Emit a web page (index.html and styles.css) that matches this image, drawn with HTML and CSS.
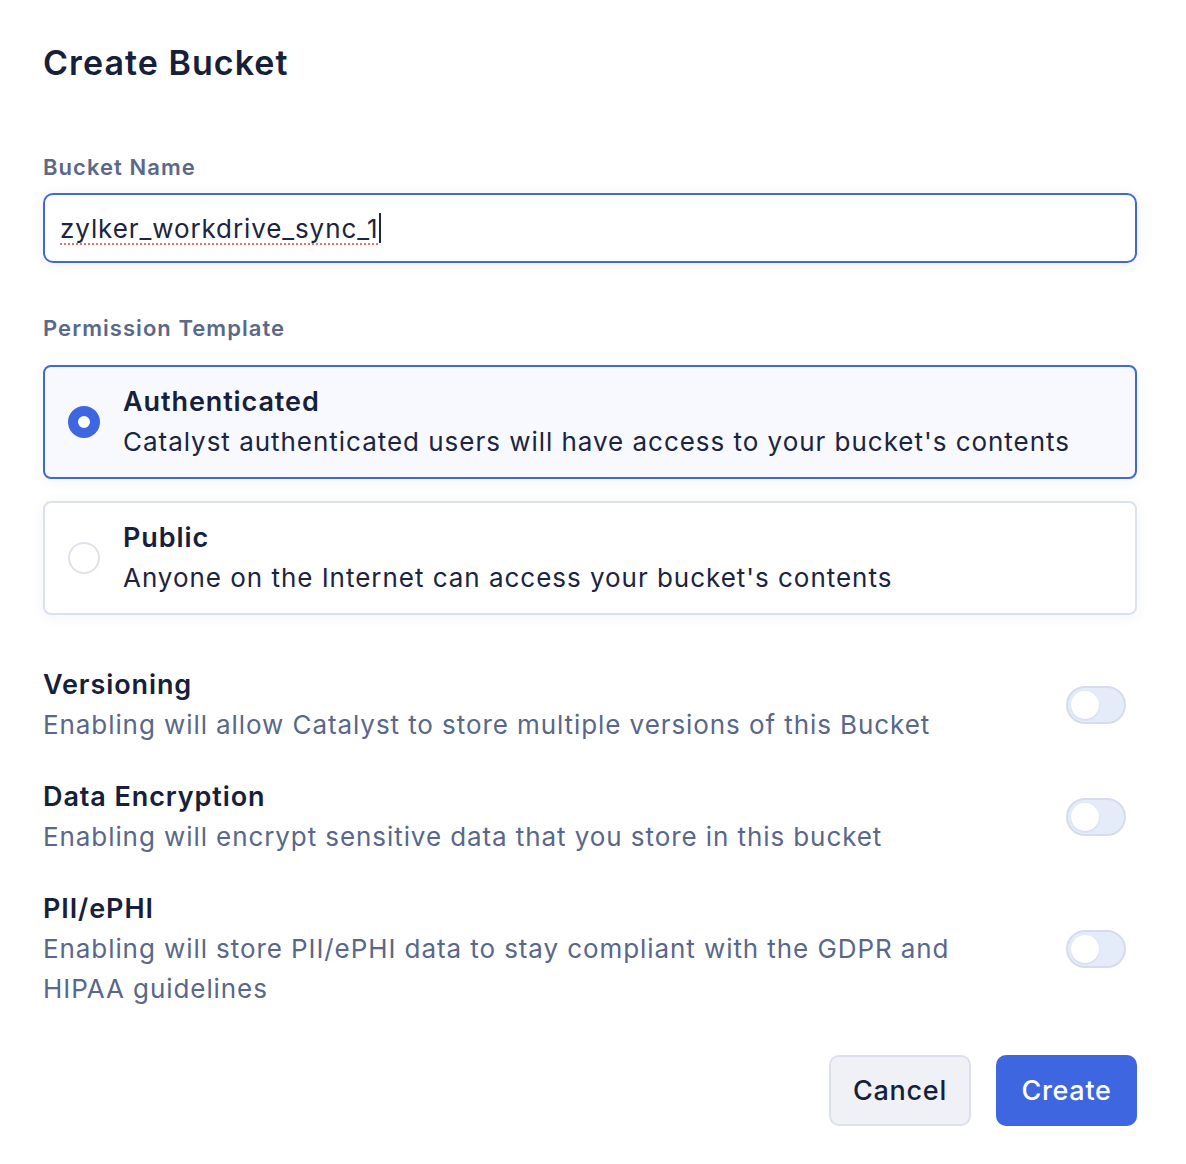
FILE: index.html
```html
<!DOCTYPE html>
<html lang="en">
<head>
<meta charset="utf-8">
<title>Create Bucket</title>
<link rel="stylesheet" href="styles.css">
</head>
<body>
<main class="dialog">
  <h1 class="title">Create Bucket</h1>

  <section class="field">
    <label class="label">Bucket Name</label>
    <div class="input" role="textbox"><span class="value">zylker_workdrive_sync_1</span><span class="caret"></span></div>
  </section>

  <section class="field perm">
    <label class="label">Permission Template</label>
    <div class="options">
      <div class="option selected">
        <span class="radio on"></span>
        <div class="opt-text">
          <div class="opt-title">Authenticated</div>
          <div class="opt-desc">Catalyst authenticated users will have access to your bucket's contents</div>
        </div>
      </div>
      <div class="option">
        <span class="radio"></span>
        <div class="opt-text">
          <div class="opt-title">Public</div>
          <div class="opt-desc">Anyone on the Internet can access your bucket's contents</div>
        </div>
      </div>
    </div>
  </section>

  <section class="settings">
    <div class="setting">
      <div class="set-text">
        <div class="set-title">Versioning</div>
        <div class="set-desc">Enabling will allow Catalyst to store multiple versions of this Bucket</div>
      </div>
      <span class="toggle"><span class="knob"></span></span>
    </div>
    <div class="setting">
      <div class="set-text">
        <div class="set-title">Data Encryption</div>
        <div class="set-desc">Enabling will encrypt sensitive data that you store in this bucket</div>
      </div>
      <span class="toggle"><span class="knob"></span></span>
    </div>
    <div class="setting">
      <div class="set-text">
        <div class="set-title">PII/ePHI</div>
        <div class="set-desc">Enabling will store PII/ePHI data to stay compliant with the GDPR and HIPAA guidelines</div>
      </div>
      <span class="toggle"><span class="knob"></span></span>
    </div>
  </section>

  <footer class="actions">
    <button class="btn cancel">Cancel</button>
    <button class="btn create">Create</button>
  </footer>
</main>
</body>
</html>
```
FILE: styles.css
```css
* { box-sizing: border-box; }
html, body { margin: 0; padding: 0; background: #ffffff; }
body {
  font-family: Inter, "Noto Sans", "Liberation Sans", sans-serif;
  color: #1b2440;
}
.dialog {
  width: 1094px;
  margin-left: 43px;
  padding-top: 41px;
  display: flex;
  flex-direction: column;
}
.title {
  margin: 0;
  font-size: 34px;
  line-height: 44px;
  font-weight: 600;
  color: #16203b;
  letter-spacing: 1.05px;
}
.field { display: flex; flex-direction: column; gap: 11px; margin-top: 67px; }
.field.perm { margin-top: 50px; gap: 22px; }
.label {
  font-size: 22px;
  line-height: 30px;
  font-weight: 600;
  color: #5b6888;
  letter-spacing: 1.05px;
}
.input {
  height: 70px;
  border: 2px solid #3f68d8;
  border-radius: 10px;
  padding: 0 15px;
  display: flex;
  align-items: center;
  font-size: 26px;
  color: #1b2440;
  letter-spacing: 0.9px;
  box-shadow: 0 2px 14px rgba(40, 60, 110, 0.07);
}
.value {
  text-decoration: underline dotted #e0766c;
  text-decoration-thickness: 2px;
  text-underline-offset: 6px;
}
.caret {
  display: inline-block;
  width: 2px;
  height: 30px;
  background: #1b2440;
  margin-left: 0;
}
.options { display: flex; flex-direction: column; gap: 22px; }
.option {
  display: flex;
  align-items: center;
  gap: 23px;
  padding: 15px 23px;
  border: 2px solid #dde1ed;
  border-radius: 8px;
  background: #ffffff;
  box-shadow: 0 2px 14px rgba(40, 60, 110, 0.06);
}
.option.selected { border-color: #3f68d8; background: #f7f9fe; }
.radio {
  flex: none;
  width: 32px;
  height: 32px;
  border-radius: 50%;
  border: 2px solid #dfe2ec;
  background: #ffffff;
}
.radio.on {
  border: 10px solid #3e66e0;
  background: #ffffff;
}
.opt-title {
  font-size: 27px;
  line-height: 40px;
  font-weight: 600;
  color: #17203b;
  letter-spacing: 0.9px;
}
.opt-desc {
  font-size: 26px;
  line-height: 40px;
  color: #1b2440;
  letter-spacing: 0.97px;
}
.settings { display: flex; flex-direction: column; gap: 32px; margin-top: 50px; }
.setting { display: flex; align-items: center; justify-content: space-between; }
.set-text { width: 940px; }
.set-title {
  font-size: 27px;
  line-height: 40px;
  font-weight: 600;
  color: #17203b;
  letter-spacing: 0.9px;
}
.set-desc {
  font-size: 26px;
  line-height: 40px;
  color: #58678a;
  letter-spacing: 0.92px;
}
.toggle {
  flex: none;
  width: 60px;
  height: 38px;
  margin-right: 11px;
  border-radius: 19px;
  background: #e5ecf9;
  border: 2px solid #d6dcea;
  padding: 3px;
  display: flex;
  align-items: center;
}
.knob {
  width: 28px;
  height: 28px;
  border-radius: 50%;
  background: #ffffff;
  box-shadow: 0 1px 2px rgba(40, 60, 110, 0.12);
}
.actions {
  display: flex;
  justify-content: flex-end;
  gap: 25px;
  margin-top: 46px;
}
.btn {
  height: 71px;
  border-radius: 10px;
  font-family: inherit;
  font-size: 27px;
  font-weight: 500;
  letter-spacing: 0.7px;
  padding: 0;
  cursor: pointer;
}
.cancel {
  width: 142px;
  background: #eff1f7;
  border: 2px solid #dce0ec;
  color: #17203b;
}
.create {
  width: 141px;
  background: #3e66e0;
  border: none;
  color: #ffffff;
}
```
